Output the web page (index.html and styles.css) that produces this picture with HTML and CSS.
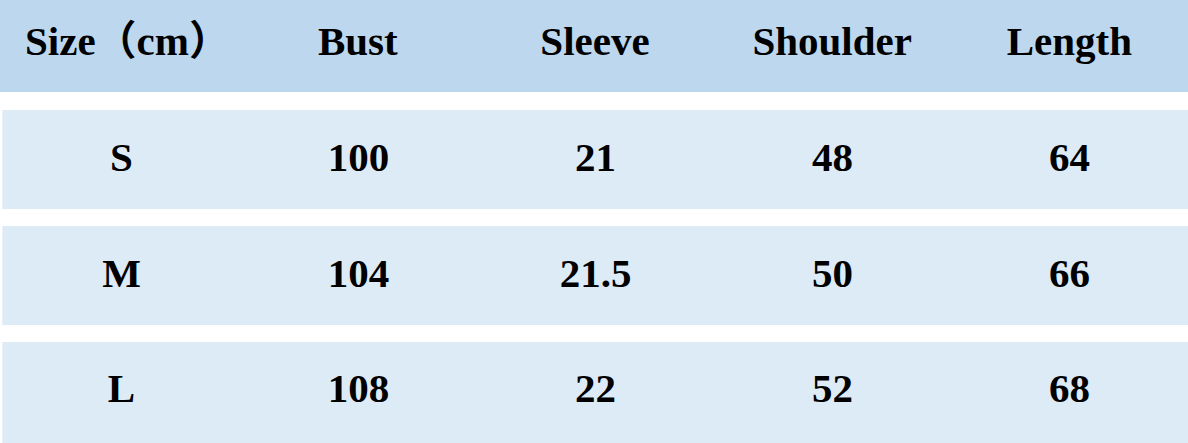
FILE: index.html
```html
<!DOCTYPE html>
<html>
<head>
<meta charset="utf-8">
<link rel="stylesheet" href="styles.css">
</head>
<body>
<div class="table">
  <div class="head">
    <div class="cell">Size（cm）</div>
    <div class="cell">Bust</div>
    <div class="cell">Sleeve</div>
    <div class="cell">Shoulder</div>
    <div class="cell">Length</div>
  </div>
  <div class="row">
    <div class="cell">S</div>
    <div class="cell">100</div>
    <div class="cell">21</div>
    <div class="cell">48</div>
    <div class="cell">64</div>
  </div>
  <div class="row">
    <div class="cell">M</div>
    <div class="cell">104</div>
    <div class="cell">21.5</div>
    <div class="cell">50</div>
    <div class="cell">66</div>
  </div>
  <div class="row last">
    <div class="cell">L</div>
    <div class="cell">108</div>
    <div class="cell">22</div>
    <div class="cell">52</div>
    <div class="cell">68</div>
  </div>
</div>
</body>
</html>
```
FILE: styles.css
```css
html, body {
  margin: 0;
  padding: 0;
  background: #ffffff;
}
body {
  width: 1188px;
  height: 443px;
  overflow: hidden;
  font-family: "Liberation Serif", "Noto Sans CJK SC", serif;
  font-weight: bold;
  font-size: 41px;
  color: #000;
}
.table {
  display: flex;
  flex-direction: column;
}
.head, .row {
  display: grid;
  grid-template-columns: repeat(5, 1fr);
  align-items: center;
}
.head {
  height: 92px;
  background: #bdd7ee;
  padding: 0 0 9px 2px;
  box-sizing: border-box;
  margin-bottom: 18px;
}
.row {
  height: 99px;
  margin-left: 2px;
  background: #ddebf7;
  border-left: 1px solid #e8f1f9;
  padding-bottom: 4px;
  box-sizing: border-box;
  margin-bottom: 17px;
}
.row.last {
  height: 101px;
  margin-bottom: 0;
  padding-bottom: 8px;
}
.cell {
  text-align: center;
  line-height: 1.1;
}
.head .cell:first-child {
  text-align: left;
  padding-left: 23px;
}
```
